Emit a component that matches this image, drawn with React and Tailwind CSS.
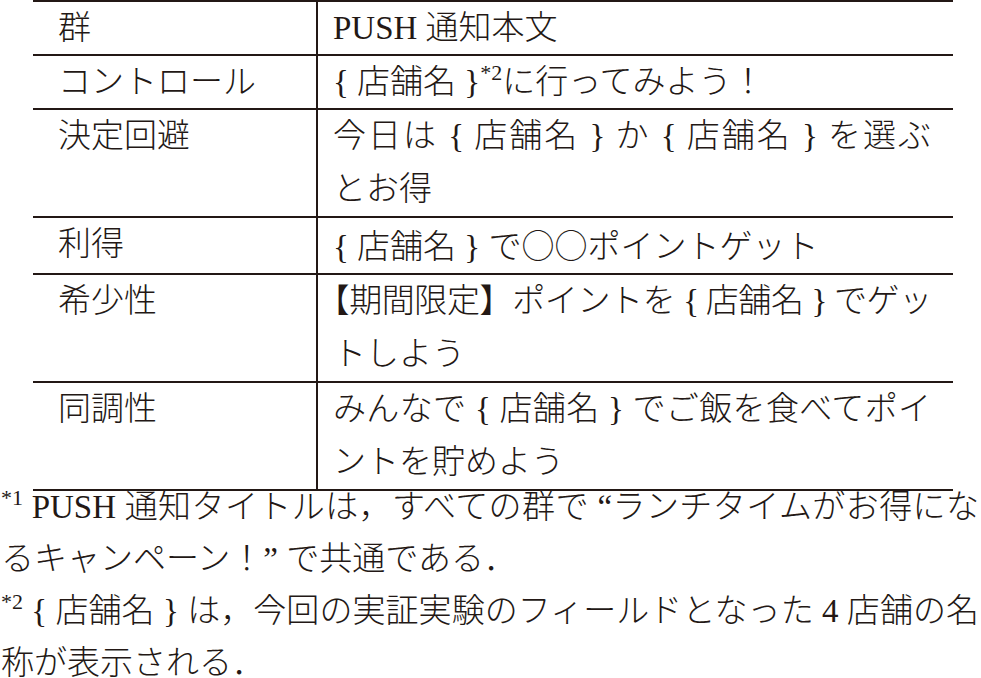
import React from 'react';

const font = "font-['Liberation_Serif','Noto_Sans_CJK_JP',serif]";

const Sup = ({ children }) => (
  <sup className="text-[22px] top-[-0.6em]">{children}</sup>
);

// first line of a wrapped cell, stretched to the column edge like the typeset original
const Full = ({ children, className = '' }) => (
  <div className={`text-justify [text-align-last:justify] ${className}`}>{children}</div>
);

const rows = [
  { group: '群', lines: ['PUSH 通知本文'] },
  {
    group: 'コントロール',
    lines: [
      <>
        {'{ 店舗名 }'}
        <Sup>*2</Sup>に行ってみよう！
      </>,
    ],
  },
  { group: '決定回避', lines: ['今日は { 店舗名 } か { 店舗名 } を選ぶ', 'とお得'] },
  {
    group: '利得',
    lines: [
      <>
        {'{ 店舗名 } で'}
        <span className="font-['Noto_Sans_CJK_JP',sans-serif]">○○</span>ポイントゲット
      </>,
    ],
  },
  {
    group: '希少性',
    lines: [
      <>
        <span className="[font-feature-settings:'halt']">【</span>期間限定】ポイントを {'{ 店舗名 }'} でゲッ
      </>,
      'トしよう',
    ],
    tight: true,
  },
  { group: '同調性', lines: ['みんなで { 店舗名 } でご飯を食べてポイ', 'ントを貯めよう'] },
];

export default function App() {
  return (
    <div className={`w-[981px] h-[678px] overflow-hidden bg-white text-[#231815] text-[33px] font-light ${font}`}>
      {/* Table */}
      <div className="ml-[33px] w-[920px] border-t-2 border-[#231815]">
        {rows.map((row, i) => {
          const multi = row.lines.length > 1;
          return (
            <div key={i} className="flex border-b-2 border-[#231815]">
              <div
                className={`w-[285px] shrink-0 border-r-2 border-[#231815] pl-[25px] ${
                  multi ? 'leading-[53px]' : 'leading-[52px]'
                }`}
              >
                {row.group}
              </div>
              <div className={`flex-1 pl-[15px] pr-[22px] ${multi ? 'leading-[53px]' : 'leading-[52px]'}`}>
                {multi ? (
                  <>
                    <Full className={row.tight ? 'tracking-[-1.2px]' : ''}>{row.lines[0]}</Full>
                    <div>{row.lines[1]}</div>
                  </>
                ) : (
                  <div className="whitespace-nowrap">{row.lines[0]}</div>
                )}
              </div>
            </div>
          );
        })}
      </div>

      {/* Notes */}
      <div className="-mt-[10px] w-[979px] pl-[1px] leading-[52px]">
        <Full>
          <Sup>*1</Sup> PUSH 通知タイトルは，すべての群で “ランチタイムがお得にな
        </Full>
        <div>るキャンペーン！” で共通である．</div>
        <Full>
          <Sup>*2</Sup> {'{ 店舗名 }'} は，今回の実証実験のフィールドとなった 4 店舗の名
        </Full>
        <div>称が表示される．</div>
      </div>
    </div>
  );
}
